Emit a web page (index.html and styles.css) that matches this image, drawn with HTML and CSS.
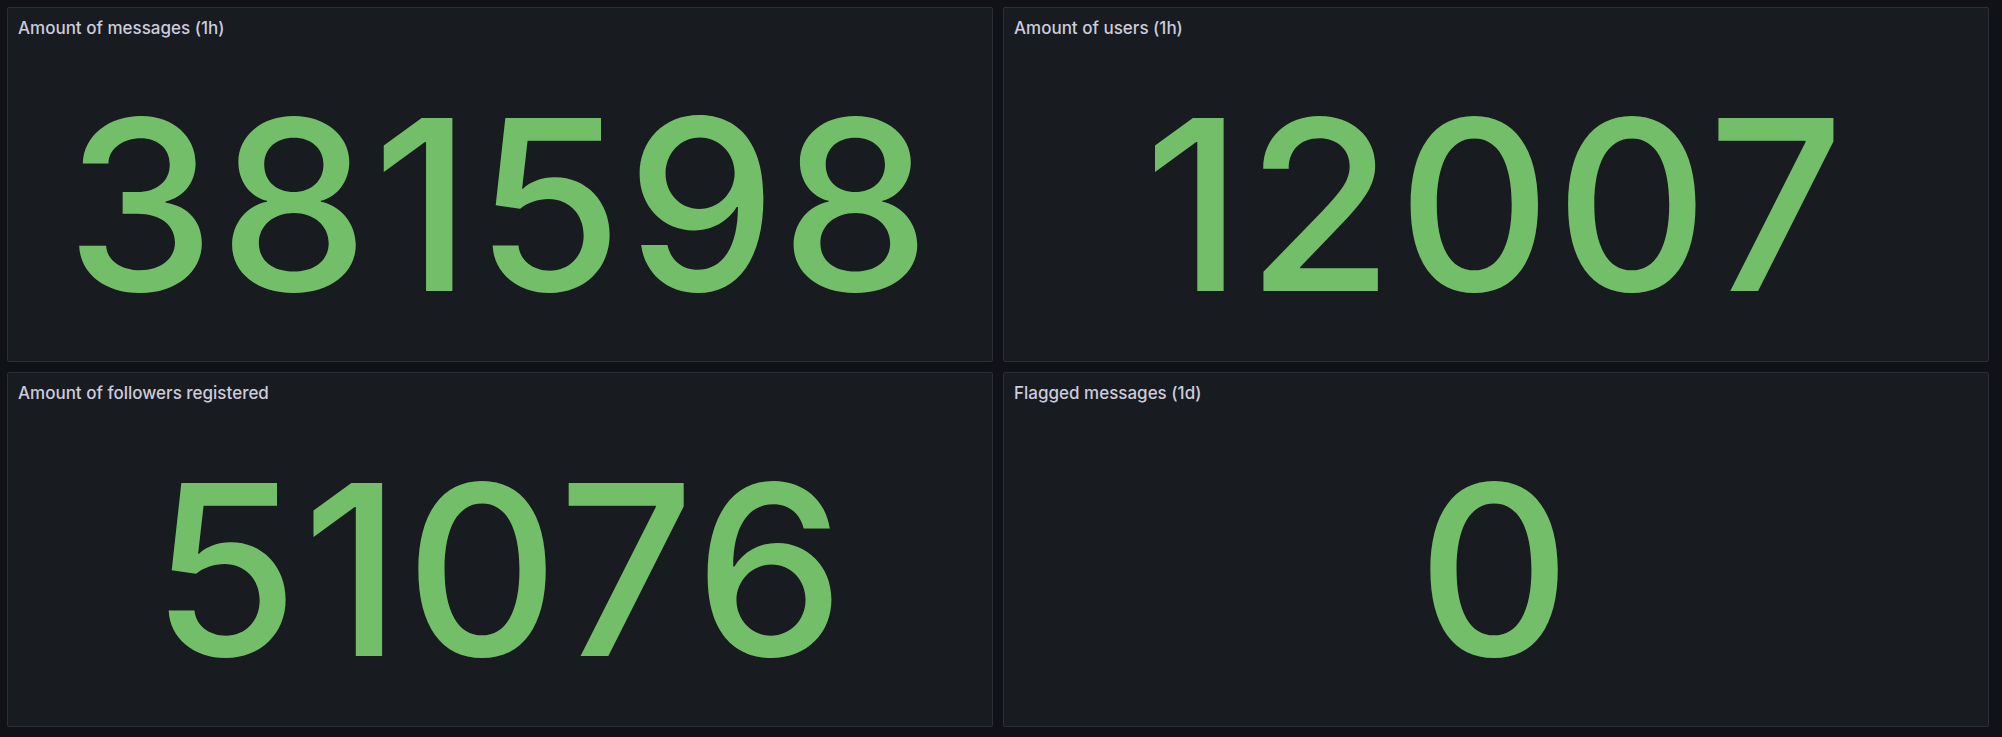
FILE: index.html
```html
<!DOCTYPE html>
<html>
<head>
<meta charset="utf-8">
<link rel="stylesheet" href="styles.css">
</head>
<body>
<div class="grid">
  <section class="panel">
    <header class="panel-title">Amount of messages (1h)</header>
    <div class="panel-value"><span class="value">381598</span></div>
  </section>
  <section class="panel">
    <header class="panel-title">Amount of users (1h)</header>
    <div class="panel-value"><span class="value">12007</span></div>
  </section>
  <section class="panel">
    <header class="panel-title">Amount of followers registered</header>
    <div class="panel-value"><span class="value">51076</span></div>
  </section>
  <section class="panel">
    <header class="panel-title">Flagged messages (1d)</header>
    <div class="panel-value"><span class="value">0</span></div>
  </section>
</div>
</body>
</html>
```
FILE: styles.css
```css
html, body {
  margin: 0;
  padding: 0;
  background: #111217;
  height: 100%;
}
body {
  font-family: Inter, "Noto Sans", sans-serif;
  overflow: hidden;
}
.grid {
  display: grid;
  grid-template-columns: 986px 986px;
  grid-template-rows: 355px 355px;
  gap: 10px;
  padding: 7px 0 0 7px;
}
.panel {
  background: #181b1f;
  border: 1px solid #2b2e34;
  border-radius: 2px;
  display: flex;
  flex-direction: column;
  box-sizing: border-box;
  overflow: hidden;
}
.panel-title {
  height: 35px;
  padding: 4px 10px 0;
  box-sizing: border-box;
  display: flex;
  align-items: center;
  font-size: 17px;
  font-weight: 500;
  color: #ccccdc;
  flex-shrink: 0;
}
.panel-value {
  flex: 1;
  display: flex;
  align-items: center;
  justify-content: center;
  padding-top: 4px;
}
.value {
  font-size: 238px;
  font-weight: 500;
  letter-spacing: 4px;
  line-height: 1;
  color: #73bf69;
}
```
